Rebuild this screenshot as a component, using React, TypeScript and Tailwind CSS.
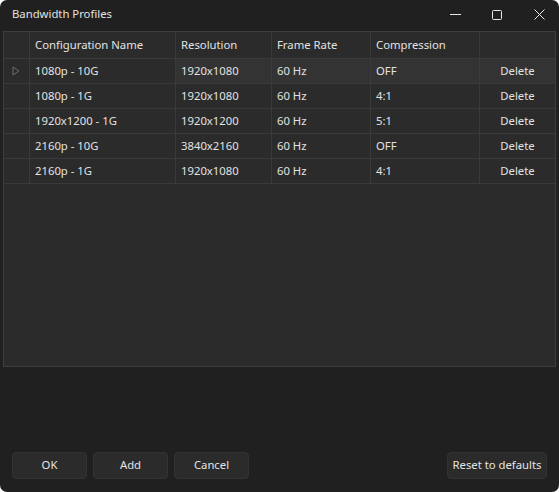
const columns = [
  { label: "Configuration Name", w: "w-[146px]" },
  { label: "Resolution", w: "w-[96px]" },
  { label: "Frame Rate", w: "w-[99px]" },
  { label: "Compression", w: "w-[109px]" },
];

const rows = [
  ["1080p - 10G", "1920x1080", "60 Hz", "OFF"],
  ["1080p - 1G", "1920x1080", "60 Hz", "4:1"],
  ["1920x1200 - 1G", "1920x1200", "60 Hz", "5:1"],
  ["2160p - 10G", "3840x2160", "60 Hz", "OFF"],
  ["2160p - 1G", "1920x1080", "60 Hz", "4:1"],
];

function DialogButton({ label, className }: { label: string; className?: string }) {
  return (
    <button
      className={
        "h-[27px] rounded-[4px] border border-[#333333] bg-[#2b2b2b] text-[11.3px] text-[#e4e4e4] " +
        (className ?? "")
      }
    >
      {label}
    </button>
  );
}

export default function App() {
  return (
    <div className="h-[492px] w-[559px] bg-white font-['Noto_Sans','Open_Sans',sans-serif]">
      <div className="flex h-full w-full flex-col overflow-hidden rounded-[7px] bg-[#202020] text-[#e2e2e2]">
        {/* Title bar */}
        <div className="flex h-[31px] shrink-0 items-center pl-3 pb-[2px]">
          <span className="flex-1 text-[11.3px]">Bandwidth Profiles</span>
          <div className="flex items-center">
            <svg width="11" height="11" viewBox="0 0 11 11" className="mr-[31px]">
              <path d="M0 5.5 H11" stroke="#e8e8e8" strokeWidth="1" />
            </svg>
            <svg width="10" height="10" viewBox="0 0 10 10" className="mr-[32px]">
              <rect x="0.5" y="0.5" width="9" height="9" rx="1" fill="none" stroke="#e8e8e8" strokeWidth="1" />
            </svg>
            <svg width="11" height="11" viewBox="0 0 11 11" className="mr-[14px]">
              <path d="M0.5 0.5 L10.5 10.5 M10.5 0.5 L0.5 10.5" stroke="#e8e8e8" strokeWidth="1" />
            </svg>
          </div>
        </div>

        {/* Table */}
        <div className="ml-[3px] mr-[3px] h-[336px] shrink-0 border border-[#3d3d3d] bg-[#2b2b2b] text-[11.3px]">
          <div className="flex h-[27px] border-b border-[#3a3a3a]">
            <div className="w-[26px] border-r border-[#3a3a3a]" />
            {columns.map((c) => (
              <div
                key={c.label}
                className={"flex items-center border-r border-[#3a3a3a] pl-[5px] " + c.w}
              >
                {c.label}
              </div>
            ))}
            <div className="flex-1" />
          </div>
          {rows.map((r, i) => (
            <div key={i} className="flex h-[25px] border-b border-[#3a3a3a]">
              <div className="flex w-[26px] items-center justify-center border-r border-[#3a3a3a]">
                {i === 0 && (
                  <svg width="8" height="10" viewBox="0 0 8 10" className="ml-[-1px]">
                    <path d="M1 1 L7 5 L1 9 Z" fill="none" stroke="#6e6e6e" strokeWidth="1" />
                  </svg>
                )}
              </div>
              {r.map((cell, j) => (
                <div
                  key={j}
                  className={
                    "flex items-center border-r border-[#3a3a3a] pl-[5px] " +
                    columns[j].w +
                    (i === 0 && j > 0 ? " bg-[#333333]" : "")
                  }
                >
                  {cell}
                </div>
              ))}
              <div
                className={
                  "flex flex-1 items-center justify-center" + (i === 0 ? " bg-[#333333]" : "")
                }
              >
                Delete
              </div>
            </div>
          ))}
        </div>

        <div className="flex-1" />

        {/* Buttons */}
        <div className="mb-[13px] flex px-3">
          <DialogButton label="OK" className="w-[75px]" />
          <DialogButton label="Add" className="ml-[6px] w-[75px]" />
          <DialogButton label="Cancel" className="ml-[6px] w-[75px]" />
          <div className="flex-1" />
          <DialogButton label="Reset to defaults" className="w-[100px]" />
        </div>
      </div>
    </div>
  );
}
